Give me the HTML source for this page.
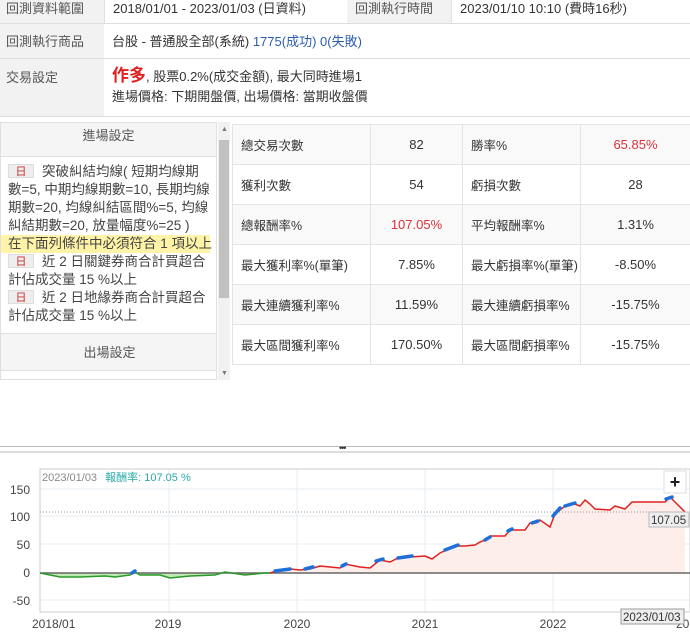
<!DOCTYPE html>
<html><head><meta charset="utf-8"><style>
*{box-sizing:border-box;margin:0;padding:0}
body{width:690px;height:635px;overflow:hidden;background:#fff;font-family:"Liberation Sans","Noto Sans CJK TC",sans-serif;font-size:13px;color:#333;position:relative}
.a{position:absolute}
.lbl{background:#f2f2f2;color:#555}
.hl{border-bottom:1px solid #ddd}
.tag{display:inline-block;width:26px;height:14px;line-height:14px;text-align:center;background:#eee;border:1px solid #ddd;color:#c33;font-size:11px;margin-right:8px;vertical-align:1px}
table{border-collapse:collapse;table-layout:fixed}
td{border:1px solid #e4e4e4;height:40px;font-size:12.5px;color:#333;padding:0 0 0 8px;white-space:nowrap;overflow:hidden}
td.v{text-align:center;padding:0;font-size:13px}
tr:nth-child(odd) td{background:#f9f9f9}
.red{color:#d9323a}
.ln{white-space:nowrap;height:18px;line-height:18px}
</style></head><body>
<div class="a lbl hl" style="left:0;top:0;width:104px;height:24px;padding:0 6px;line-height:18px">回測資料範圍</div>
<div class="a hl" style="left:104px;top:0;width:243px;height:24px;padding-left:8px;line-height:18px;border-left:1px solid #e0e0e0">2018/01/01 - 2023/01/03 (日資料)</div>
<div class="a lbl hl" style="left:347px;top:0;width:104px;height:24px;padding-left:8px;line-height:18px">回測執行時間</div>
<div class="a hl" style="left:451px;top:0;width:239px;height:24px;padding-left:8px;line-height:18px;border-left:1px solid #e0e0e0">2023/01/10 10:10 (費時16秒)</div>
<div class="a lbl hl" style="left:0;top:24px;width:104px;height:35px;padding:0 6px;line-height:35px">回測執行商品</div>
<div class="a hl" style="left:104px;top:24px;width:586px;height:35px;padding-left:8px;line-height:35px">台股 - 普通股全部(系統) <span style="color:#2a5db0">1775(成功) 0(失敗)</span></div>
<div class="a lbl hl" style="left:0;top:59px;width:104px;height:58px;padding:8px 6px">交易設定</div>
<div class="a hl" style="left:104px;top:59px;width:586px;height:58px;padding:7px 8px;line-height:20px"><span style="color:#e02020;font-size:17px;font-weight:bold">作多</span>, 股票0.2%(成交金額), 最大同時進場1<br>進場價格: 下期開盤價, 出場價格: 當期收盤價</div>
<div class="a" style="left:0;top:122px;width:217px;height:258px;border:1px solid #e0e0e0;overflow:hidden">
<div style="height:34px;background:#f5f5f5;text-align:center;line-height:26px;border-bottom:1px solid #e0e0e0;color:#555">進場設定</div>
<div style="padding:6px 0 0 7px;font-size:13.5px;color:#444">
<div class="ln"><span class="tag">日</span>突破糾結均線( 短期均線期</div>
<div class="ln">數=5, 中期均線期數=10, 長期均線</div>
<div class="ln">期數=20, 均線糾結區間%=5, 均線</div>
<div class="ln">糾結期數=20, 放量幅度%=25 )</div>
<div class="ln" style="background:#fff3a8;margin-left:-7px;padding-left:7px;width:209px">在下面列條件中必須符合 1 項以上</div>
<div class="ln"><span class="tag">日</span>近 2 日關鍵券商合計買超合</div>
<div class="ln">計佔成交量 15 %以上</div>
<div class="ln"><span class="tag">日</span>近 2 日地緣券商合計買超合</div>
<div class="ln">計佔成交量 15 %以上</div></div>
<div style="position:absolute;left:0;top:210px;width:217px;height:38px;background:#f5f5f5;border-top:1px solid #e0e0e0;border-bottom:1px solid #e0e0e0;text-align:center;line-height:38px;color:#555">出場設定</div>
</div>
<div class="a" style="left:218px;top:122px;width:12px;height:258px;background:#f1f1f1"></div>
<div class="a" style="left:219px;top:140px;width:10px;height:158px;background:#c1c1c1"></div>
<div class="a" style="left:221px;top:126px;color:#777;font-size:7px">▲</div>
<div class="a" style="left:221px;top:370px;color:#777;font-size:7px">▼</div>
<table class="a" style="left:232px;top:124px;width:458px">
<col style="width:138px"><col style="width:92px"><col style="width:118px"><col style="width:110px">
<tr><td>總交易次數</td><td class="v">82</td><td>勝率%</td><td class="v red">65.85%</td></tr>
<tr><td>獲利次數</td><td class="v">54</td><td>虧損次數</td><td class="v">28</td></tr>
<tr><td>總報酬率%</td><td class="v red">107.05%</td><td>平均報酬率%</td><td class="v">1.31%</td></tr>
<tr><td>最大獲利率%(單筆)</td><td class="v">7.85%</td><td>最大虧損率%(單筆)</td><td class="v">-8.50%</td></tr>
<tr><td>最大連續獲利率%</td><td class="v">11.59%</td><td>最大連續虧損率%</td><td class="v">-15.75%</td></tr>
<tr><td>最大區間獲利率%</td><td class="v">170.50%</td><td>最大區間虧損率%</td><td class="v">-15.75%</td></tr>
</table>
<div class="a" style="left:0;top:446px;width:690px;height:1px;background:#bbb"></div>
<div class="a" style="left:0;top:451px;width:690px;height:2px;background:#ddd"></div>
<div class="a" style="left:339px;top:443px;font-size:9px;color:#333;letter-spacing:-1px">•••</div>
<svg class="a" style="left:0;top:455px" width="690" height="180" viewBox="0 455 690 180">
<g stroke="#e6eef2" stroke-width="1">
<line x1="169" y1="469" x2="169" y2="612"/><line x1="297" y1="469" x2="297" y2="612"/><line x1="425" y1="469" x2="425" y2="612"/><line x1="553" y1="469" x2="553" y2="612"/>
<line x1="40" y1="489" x2="690" y2="489"/><line x1="40" y1="516" x2="690" y2="516"/><line x1="40" y1="544" x2="690" y2="544"/><line x1="40" y1="600" x2="690" y2="600"/>
</g>
<rect x="40" y="469" width="650" height="143" fill="none" stroke="#ccc"/>
<polygon fill="#bfeab3" points="40,573 50,575 60,577 80,577 105,576 115,577 130,575 135,572 140,575 160,575 170,578 190,576 215,575 225,572 245,575 265,573 270,573"/>
<polygon fill="#fdeeea" points="270,573 280,570 290,569 300,570 310,569 320,566 340,568 345,564 360,567 370,568 380,560 390,562 400,557 410,557 425,556 432,559 440,553 455,546 465,546 475,545 480,542 485,540 490,536 505,536 510,530 525,530 530,523 536,523 540,520 550,527 555,514 565,506 572,503 580,506 585,500 590,504 595,509 610,510 615,506 625,509 632,502 650,502 665,502 670,497 678,505 685,512 685,573"/>
<line x1="40" y1="573" x2="690" y2="573" stroke="#666" stroke-width="1.5"/>
<line x1="40" y1="512" x2="690" y2="512" stroke="#999" stroke-dasharray="1,2"/>
<polyline fill="none" stroke="#2a9a2a" stroke-width="1.5" points="40,573 50,575 60,577 80,577 105,576 115,577 130,575 135,572 140,575 160,575 170,578 190,576 215,575 225,572 245,575 265,573 270,573"/>
<polyline fill="none" stroke="#e02020" stroke-width="1.5" points="270,573 280,570 290,569 300,570 310,569 320,566 340,568 345,564 360,567 370,568 380,560 390,562 400,557 410,557 425,556 432,559 440,553 455,546 465,546 475,545 480,542 485,540 490,536 505,536 510,530 525,530 530,523 536,523 540,520 550,527 555,514 565,506 572,503 580,506 585,500 590,504 595,509 610,510 615,506 625,509 632,502 650,502 665,502 670,497 678,505 685,512"/>
<g fill="none" stroke="#1e6fd9" stroke-width="3.5" stroke-linecap="round">
<polyline points="275,571 290,569"/><polyline points="305,569 313,567"/><polyline points="342,566 346,564"/><polyline points="376,561 383,559"/><polyline points="398,558 412,556"/><polyline points="445,550 458,545"/><polyline points="485,540 490,537"/><polyline points="508,531 512,529"/><polyline points="532,523 538,521"/><polyline points="553,516 560,508"/><polyline points="565,506 575,503"/><polyline points="666,499 672,497"/>
<polyline points="132,573 135,571"/>
</g>
<g font-size="12" fill="#444" font-family="Liberation Sans,sans-serif">
<text x="30" y="494" text-anchor="end">150</text><text x="30" y="521" text-anchor="end">100</text><text x="30" y="549" text-anchor="end">50</text><text x="30" y="577" text-anchor="end">0</text><text x="30" y="605" text-anchor="end">-50</text>
<text x="32" y="628">2018/01</text><text x="168" y="628" text-anchor="middle">2019</text><text x="297" y="628" text-anchor="middle">2020</text><text x="425" y="628" text-anchor="middle">2021</text><text x="553" y="628" text-anchor="middle">2022</text><text x="676" y="628">2023/01</text>
</g>
<text x="42" y="481" font-size="11" fill="#888" font-family="Liberation Sans,Noto Sans CJK TC,sans-serif">2023/01/03 <tspan fill="#2aa8a8" dx="5">報酬率: 107.05 %</tspan></text>
<rect x="664" y="471" width="22" height="22" fill="#fff" stroke="#ddd"/>
<text x="675" y="488" font-size="18" font-weight="bold" text-anchor="middle" fill="#222">+</text>
<rect x="649" y="512" width="40" height="15" fill="#eee" stroke="#bbb"/>
<text x="651" y="524" font-size="11.5" fill="#333">107.05</text>
<rect x="621" y="609" width="63" height="15" fill="#eee" stroke="#999"/>
<text x="623" y="621" font-size="11.5" fill="#333">2023/01/03</text>
</svg>
</body></html>
